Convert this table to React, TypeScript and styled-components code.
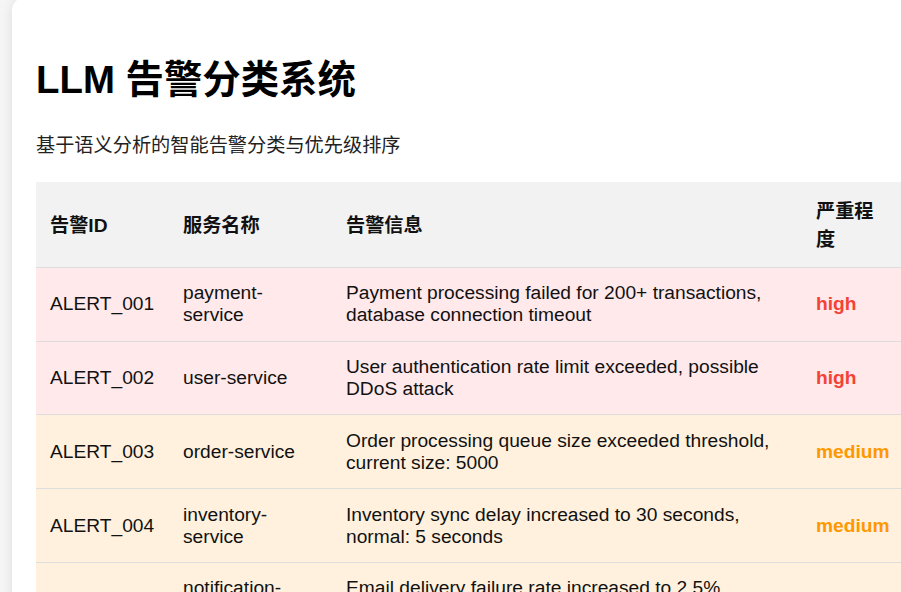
import React from "react";
import styled, { createGlobalStyle } from "styled-components";

const GlobalStyle = createGlobalStyle`
  html, body {
    margin: 0;
    padding: 0;
    overflow: hidden;
    background-color: #f5f5f5;
    font-family: "Liberation Sans", Arial, "Noto Sans CJK SC", sans-serif;
    color: #111;
  }
`;

const Page = styled.div`
  padding: 0 12px 12px;
`;

const StyledCard = styled.div`
  width: 1240px;
  margin-top: -2px;
  padding: 24px;
  border-radius: 12px;
  background-color: #fff;
  box-shadow: 0 2px 12px rgba(0, 0, 0, 0.1);
`;

const Title = styled.h1`
  margin: 26px 0;
  font-size: 38.4px;
  font-weight: bold;
  color: #000;
`;

const Subtitle = styled.p`
  margin: 0 0 24px;
  font-size: 19.2px;
  color: #222;
`;

const Table = styled.table`
  width: 100%;
  border-collapse: collapse;
  table-layout: fixed;
  font-size: 19.2px;
`;

const HeadRow = styled.tr`
  background-color: #f2f2f2;
`;

const HeadCell = styled.th`
  padding: 14.4px 14px;
  text-align: left;
  font-weight: bold;
  border-bottom: 1px solid #ddd;
`;

type Severity = "high" | "medium" | "low";

const rowColors: Record<Severity, string> = {
  high: "#ffe9eb",
  medium: "#fff1de",
  low: "#eaf6ea",
};

const textColors: Record<Severity, string> = {
  high: "#f44336",
  medium: "#ff9800",
  low: "#4caf50",
};

const Row = styled.tr<{ $severity: Severity }>`
  background-color: ${({ $severity }) => rowColors[$severity]};
`;

const Cell = styled.td`
  padding: 14.4px 14px;
  border-bottom: 1px solid #ddd;
  vertical-align: middle;
`;

const SeverityText = styled.span<{ $severity: Severity }>`
  font-weight: bold;
  color: ${({ $severity }) => textColors[$severity]};
`;

type Alert = {
  id: string;
  service: string;
  message: string;
  severity: Severity;
  category: string;
  priority: string;
};

const alerts: Alert[] = [
  {
    id: "ALERT_001",
    service: "payment-service",
    message:
      "Payment processing failed for 200+ transactions, database connection timeout",
    severity: "high",
    category: "数据库",
    priority: "P0",
  },
  {
    id: "ALERT_002",
    service: "user-service",
    message: "User authentication rate limit exceeded, possible DDoS attack",
    severity: "high",
    category: "安全",
    priority: "P0",
  },
  {
    id: "ALERT_003",
    service: "order-service",
    message:
      "Order processing queue size exceeded threshold, current size: 5000",
    severity: "medium",
    category: "性能",
    priority: "P1",
  },
  {
    id: "ALERT_004",
    service: "inventory-service",
    message: "Inventory sync delay increased to 30 seconds, normal: 5 seconds",
    severity: "medium",
    category: "性能",
    priority: "P1",
  },
  {
    id: "ALERT_005",
    service: "notification-service",
    message:
      "Email delivery failure rate increased to 2.5%, affecting user notifications",
    severity: "medium",
    category: "网络",
    priority: "P2",
  },
];

export default function App() {
  return (
    <>
      <GlobalStyle />
      <Page>
        <StyledCard>
          <Title>LLM 告警分类系统</Title>
          <Subtitle>基于语义分析的智能告警分类与优先级排序</Subtitle>
          <Table>
            <colgroup>
              <col style={{ width: 133 }} />
              <col style={{ width: 163 }} />
              <col style={{ width: 470 }} />
              <col style={{ width: 104 }} />
              <col style={{ width: 150 }} />
              <col />
            </colgroup>
            <thead>
              <HeadRow>
                <HeadCell>告警ID</HeadCell>
                <HeadCell>服务名称</HeadCell>
                <HeadCell>告警信息</HeadCell>
                <HeadCell>严重程度</HeadCell>
                <HeadCell>分类</HeadCell>
                <HeadCell>优先级</HeadCell>
              </HeadRow>
            </thead>
            <tbody>
              {alerts.map((a) => (
                <Row key={a.id} $severity={a.severity}>
                  <Cell>{a.id}</Cell>
                  <Cell>{a.service}</Cell>
                  <Cell>{a.message}</Cell>
                  <Cell>
                    <SeverityText $severity={a.severity}>{a.severity}</SeverityText>
                  </Cell>
                  <Cell>{a.category}</Cell>
                  <Cell>{a.priority}</Cell>
                </Row>
              ))}
            </tbody>
          </Table>
        </StyledCard>
      </Page>
    </>
  );
}
